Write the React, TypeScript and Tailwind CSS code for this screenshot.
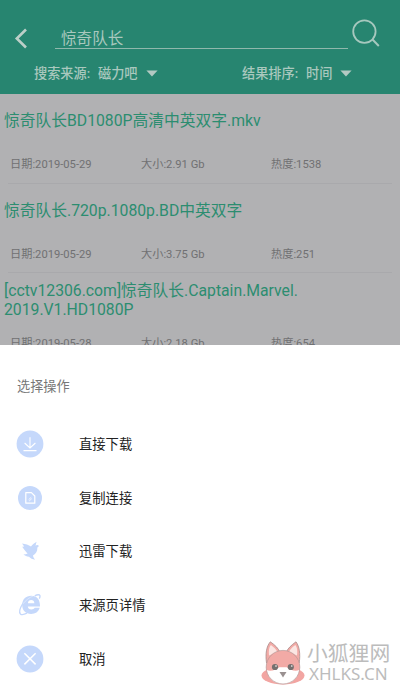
import React from "react";

type Result = { title: string[]; date: string; size: string; heat: string };

const results: Result[] = [
  { title: ["惊奇队长BD1080P高清中英双字.mkv"], date: "2019-05-29", size: "2.91 Gb", heat: "1538" },
  { title: ["惊奇队长.720p.1080p.BD中英双字"], date: "2019-05-29", size: "3.75 Gb", heat: "251" },
  { title: ["[cctv12306.com]惊奇队长.Captain.Marvel.", "2019.V1.HD1080P"], date: "2019-05-28", size: "2.18 Gb", heat: "654" },
];

function Caret() {
  return (
    <svg width="12" height="7" viewBox="0 0 12 7" className="mb-[2px] shrink-0 fill-[#b3c9c2]">
      <path d="M0.4 0.4H11.6L6 6.6Z" />
    </svg>
  );
}

function DownloadIcon() {
  return (
    <svg width="28" height="28" viewBox="0 0 28 28" fill="none">
      <circle cx="14" cy="14" r="13.4" fill="#c5d8fb" />
      <path d="M14 7.2V17.6M8.6 13L14 18L19.4 13M7.5 20.6H20.5" stroke="#fff" strokeWidth="1.1" />
    </svg>
  );
}

function CopyIcon() {
  return (
    <svg width="28" height="28" viewBox="0 0 28 28" fill="none">
      <circle cx="14" cy="14" r="12" fill="#c5d8fb" />
      <path d="M9.8 8.6H15.4L18.8 12V19.2H9.8Z" stroke="#fff" strokeWidth="1.2" strokeLinejoin="round" />
      <path d="M12.6 15.7L15.2 13.3M13.2 17L15.8 14.6" stroke="#fff" strokeWidth="0.8" />
    </svg>
  );
}

function BirdIcon() {
  return (
    <svg width="28" height="28" viewBox="0 0 28 28" fill="#c5d8fb">
      <path d="M6 6.4C9.6 6.9 12.6 7.8 15 9.6C16.6 7.6 18.6 5.8 20.6 4.8C20 6.4 19.7 7.6 19.6 8.8C20.6 7.8 21.8 7.8 23 9L21.4 10.4C21.4 14.2 20 16.8 17 18.4C17.2 20 18 21.4 19.2 22.8C16.4 22.3 14.4 21.3 13 19.8C10.8 19.6 9 18.8 7.4 17.6C9 17.6 10.4 17.3 11.6 16.6C9.6 14.8 7.8 11.8 6.2 9.8L8.2 9.6Z" />
    </svg>
  );
}

function BrowserIcon() {
  return (
    <svg width="28" height="28" viewBox="0 0 28 28" fill="none">
      <path
        fillRule="evenodd"
        fill="#c5d8fb"
        d="M15.2 4.8C20.8 4.8 24.3 8.7 24 15.5H11.8C12 17.5 13.4 18.5 15.3 18.5C17 18.5 18 17.9 18.7 16.8H23.7C22.4 20.9 19.4 23 15.1 23C9.7 23 6.2 19.5 6.2 14C6.2 8.4 9.8 4.8 15.2 4.8ZM11.9 12.2H18.4C18.2 10.2 17.1 9.1 15.2 9.1C13.3 9.1 12.2 10.3 11.9 12.2Z"
      />
      <path
        d="M18.8 4.9C21.4 3.5 23.4 3.4 23.9 4.5C24.2 5.3 24 6.4 23.3 7.6M7.1 12C4 17 2.9 21.2 4.4 22.9C5.6 24.1 8.1 23.6 11 22.2"
        stroke="#c5d8fb"
        strokeWidth="1.4"
      />
      <path d="M7 12.8C10 9 13.5 6.5 17.2 4.9" stroke="#fff" strokeWidth="0.4" />
    </svg>
  );
}

function CancelIcon() {
  return (
    <svg width="28" height="28" viewBox="0 0 28 28" fill="none">
      <circle cx="14" cy="14" r="13.4" fill="#c5d8fb" />
      <path d="M8.4 8.2L19.6 19.4M19.6 8.2L8.4 19.4" stroke="#fff" strokeWidth="1.5" />
    </svg>
  );
}

const actions = [
  { label: "直接下载", Icon: DownloadIcon },
  { label: "复制连接", Icon: CopyIcon },
  { label: "迅雷下载", Icon: BirdIcon },
  { label: "来源页详情", Icon: BrowserIcon },
  { label: "取消", Icon: CancelIcon },
];

function Fox() {
  return (
    <svg width="44" height="46" viewBox="0 0 44 46" fill="none">
      <ellipse cx="22" cy="35.5" rx="21.5" ry="9" fill="#f2a5a2" />
      <path d="M5.5 23C4.3 14 5.3 6.5 9.3 1.8C14 5 17.6 8.5 19 12.4H25C26.8 8.5 30.4 5 35 1.8C38.5 6.5 39.5 14 38.2 23Z" fill="#f2aaa6" stroke="#a98d8b" strokeWidth="0.8" />
      <path d="M8 15.5C7.5 10.5 8 7 9.9 5C13 7.2 15 9.4 16.4 12ZM28 12C29.2 9.4 31.4 7 34.4 5C36.2 7.2 36.7 10.8 36 15.5Z" fill="#fbe6e3" />
      <circle cx="22" cy="27.2" r="16.8" fill="#f2aaa6" />
      <path d="M5.6 30C10 31.7 15 29.8 18.3 27.2H25.7C29 29.8 34 31.7 38.4 30C37 38.8 30.8 44 22 44C13.2 44 7 38.8 5.6 30Z" fill="#fff" />
      <circle cx="22" cy="27.2" r="16.8" stroke="#b49896" strokeWidth="0.7" />
      <circle cx="14" cy="27" r="3.1" fill="#75706f" />
      <circle cx="29.8" cy="27" r="3.1" fill="#75706f" />
      <circle cx="15" cy="26" r="0.8" fill="#fff" />
      <circle cx="30.8" cy="26" r="0.8" fill="#fff" />
      <path d="M18.5 32H25.5L22 37.6Z" fill="#999090" />
    </svg>
  );
}

export default function App() {
  return (
    <div className="relative flex h-[690px] w-[400px] flex-col overflow-hidden whitespace-nowrap bg-white font-[Roboto,'Noto_Sans_CJK_SC',sans-serif]">
      <header className="h-[94px] shrink-0 bg-[#278570] text-[#a9c8be]">
        <div className="flex h-[58px] items-start pl-[14px] pt-[19px]">
          <svg width="14" height="22" viewBox="0 0 14 22" fill="none" className="mt-[9px] shrink-0">
            <path d="M12 1.5L2.8 10.5L12 19.5" stroke="#bccfc8" strokeWidth="2.6" />
          </svg>
          <div className="ml-[27px] mt-[7px] h-[23px] w-[293px] border-b border-[#8fb8ac] pl-[6px] text-[15.6px] leading-[26px]">惊奇队长</div>
          <svg width="29" height="29" viewBox="0 0 29 29" fill="none" className="ml-[4px] shrink-0">
            <circle cx="12.4" cy="12.6" r="11.2" stroke="#a6c8be" strokeWidth="1.8" />
            <path d="M20.5 20.5L26.8 27" stroke="#a6c8be" strokeWidth="2" />
          </svg>
        </div>
        <div className="flex h-[32px] items-center pl-[34px] text-[13.2px] font-medium leading-[20px]">
          <div className="flex w-[208px] items-center">
            <span className="w-[64px]">搜索来源:</span>
            <span className="w-[48px]">磁力吧</span>
            <Caret />
          </div>
          <span className="w-[64px]">结果排序:</span>
          <span className="w-[34px]">时间</span>
          <Caret />
        </div>
      </header>

      <main className="h-[251px] shrink-0 overflow-hidden bg-[#b1b1b3]">
        {results.map((r, i) => (
          <section key={i} className={i === 2 ? "h-[92px] pt-[8px]" : i === 1 ? "h-[89px] pt-[17px]" : "h-[90px] pt-[17px]"}>
            <h2 className="pl-[4px] text-[15.75px] leading-[19px] text-[#2c8d70]">
              {r.title.map((line) => (
                <div key={line}>{line}</div>
              ))}
            </h2>
            <div className={(i === 2 ? "mt-[16px] h-[27px] " : i === 1 ? "mt-[26px] h-[27px] border-b " : "mt-[26px] h-[28px] border-b ") + "mx-[8px] flex border-[#a9a9ac] pl-[2px] text-[11.2px] leading-[18px] text-[#707072]"}>
              <span className="w-[131px]">日期:{r.date}</span>
              <span className="w-[130px]">大小:{r.size}</span>
              <span>热度:{r.heat}</span>
            </div>
          </section>
        ))}
      </main>

      <div className="grow bg-white">
        <h3 className="pl-[17px] pt-[32px] text-[13.2px] leading-[20px] text-[#777]">选择操作</h3>
        <ul className="pt-[20px]">
          {actions.map(({ label, Icon }) => (
            <li key={label} className="flex h-[53.8px] items-center pl-[16px]">
              <Icon />
              <span className="ml-[35px] pt-[2px] text-[13.3px] leading-[20px] text-[#222]">{label}</span>
            </li>
          ))}
        </ul>
      </div>

      <div className="absolute left-[261px] top-[640px] flex text-[#bcbcbc]">
        <Fox />
        <div className="ml-[2px] flex flex-col">
          <span className="h-[24px] text-[20.8px] font-normal leading-[28px]">小狐狸网</span>
          <span className="pl-[2px] font-['Noto_Sans',sans-serif] text-[17px] leading-[20px]">XHLKS.CN</span>
        </div>
      </div>
    </div>
  );
}
